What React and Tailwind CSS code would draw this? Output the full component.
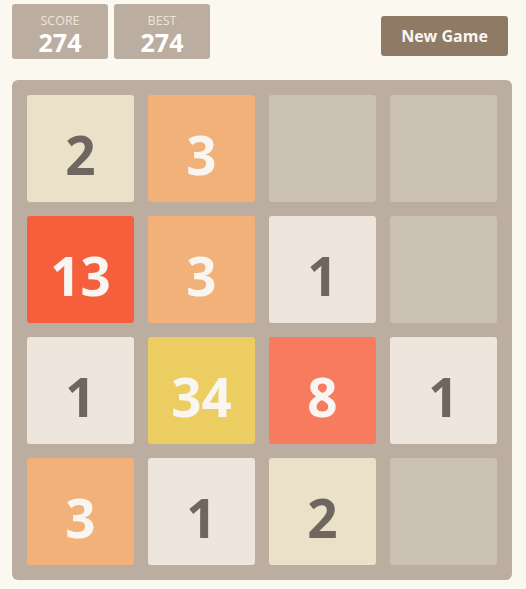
import React from "react";

const TILE_STYLES = {
  0: "bg-[#cbc1b5]",
  1: "bg-[#eee5dc] text-[#6f665f]",
  2: "bg-[#ebe1c9] text-[#6f665f]",
  3: "bg-[#f1b179] text-[#f9f6f2]",
  8: "bg-[#f67b5f] text-[#f9f6f2]",
  13: "bg-[#f65f3b] text-[#f9f6f2]",
  34: "bg-[#eccd62] text-[#f9f6f2]",
};

const BOARD = [
  [2, 3, 0, 0],
  [13, 3, 1, 0],
  [1, 34, 8, 1],
  [3, 1, 2, 0],
];

function ScoreBox({ label, value }) {
  return (
    <div className="flex h-[55px] w-[96px] flex-col items-center rounded-[3px] bg-[#bbada0] pt-[9px]">
      <span className="text-[12.5px] leading-[15px] text-[#eee4da]">{label}</span>
      <span className="mt-[1px] text-[25px] font-bold leading-[26px] text-white">{value}</span>
    </div>
  );
}

function Tile({ value }) {
  return (
    <div
      className={`flex h-[107px] w-[107px] items-center justify-center rounded-[3px] pt-[12px] text-[53px] font-bold leading-none ${TILE_STYLES[value]}`}
    >
      {value ? value : ""}
    </div>
  );
}

export default function App() {
  return (
    <div
      className="min-h-[589px] w-[526px] bg-[#fbf8ef] pt-[4px] pl-[12px]"
      style={{ fontFamily: '"Open Sans", "Liberation Sans", sans-serif' }}
    >
      <div className="flex w-[500px] items-start">
        <div className="flex gap-[6px]">
          <ScoreBox label="SCORE" value="274" />
          <ScoreBox label="BEST" value="274" />
        </div>
        <button className="ml-auto mr-[4px] mt-[12px] h-[40px] w-[127px] rounded-[3px] bg-[#8f7a66] text-[16px] font-bold text-[#f9f6f2]">
          New Game
        </button>
      </div>
      <div className="mt-[21px] grid w-[500px] grid-cols-4 gap-[14px] rounded-[6px] bg-[#bbada0] p-[15px]">
        {BOARD.flat().map((v, i) => (
          <Tile key={i} value={v} />
        ))}
      </div>
    </div>
  );
}
